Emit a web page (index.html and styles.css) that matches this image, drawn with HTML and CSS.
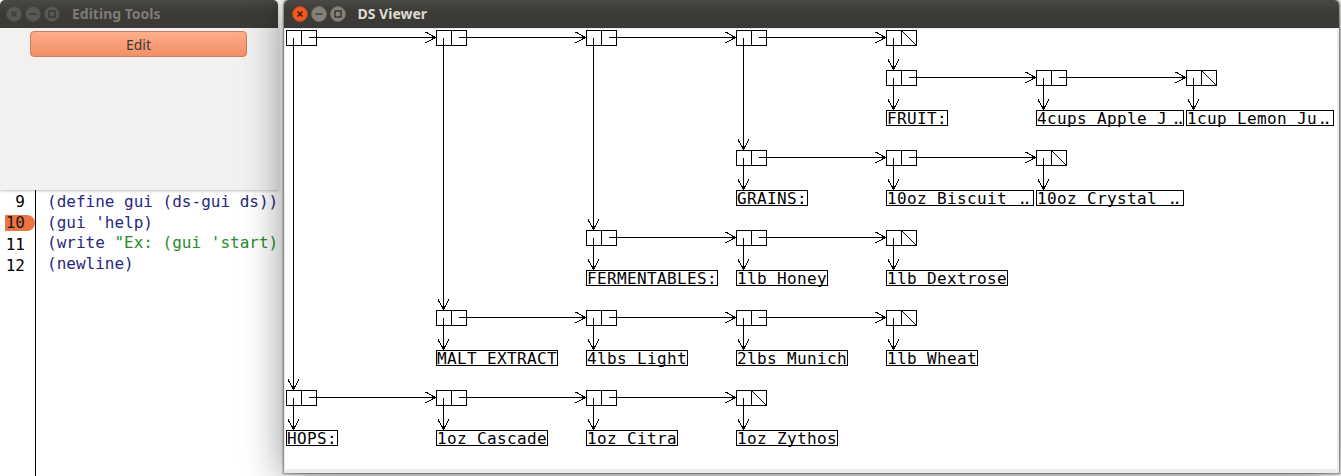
FILE: index.html
```html
<!DOCTYPE html>
<html>
<head>
<meta charset="utf-8">
<title>DS Viewer</title>
<link rel="stylesheet" href="styles.css">
</head>
<body>
<div class="desktop">
  <div class="editor">
    <div class="gutter">
      <div class="ln">9</div>
      <div class="ln"><span class="ln-hl">10</span></div>
      <div class="ln">11</div>
      <div class="ln">12</div>
    </div>
    <div class="code">
      <div class="cl"><span class="kw">(define gui (ds-gui ds))</span></div>
      <div class="cl"><span class="kw">(gui 'help)</span></div>
      <div class="cl"><span class="kw">(write </span><span class="str">"Ex: (gui 'start)</span></div>
      <div class="cl"><span class="kw">(newline)</span></div>
    </div>
  </div>

  <div class="win tools">
    <div class="titlebar inactive">
      <div class="wbtns">
        <svg class="wbtn" width="16" height="16" viewBox="0 0 16 16"><circle class="wb-off" cx="8" cy="8" r="7.5"/><path class="wb-sym-off" d="M5.5 5.5 L10.5 10.5 M10.5 5.5 L5.5 10.5"/></svg>
        <svg class="wbtn" width="16" height="16" viewBox="0 0 16 16"><circle class="wb-off" cx="8" cy="8" r="7.5"/><path class="wb-sym-off" d="M4.5 8 H11.5"/></svg>
        <svg class="wbtn" width="16" height="16" viewBox="0 0 16 16"><circle class="wb-off" cx="8" cy="8" r="7.5"/><rect class="wb-sym-off" x="5" y="5" width="6" height="6"/></svg>
      </div>
      <div class="wtitle">Editing Tools</div>
    </div>
    <div class="tools-body">
      <button class="edit-btn">Edit</button>
    </div>
  </div>

  <div class="win viewer">
    <div class="titlebar">
      <div class="wbtns">
        <svg class="wbtn" width="16" height="16" viewBox="0 0 16 16"><circle class="wb-close" cx="8" cy="8" r="7.5"/><path class="wb-sym-close" d="M5.5 5.5 L10.5 10.5 M10.5 5.5 L5.5 10.5"/></svg>
        <svg class="wbtn" width="16" height="16" viewBox="0 0 16 16"><circle class="wb-gray" cx="8" cy="8" r="7.5"/><path class="wb-sym" d="M4.5 8 H11.5"/></svg>
        <svg class="wbtn" width="16" height="16" viewBox="0 0 16 16"><circle class="wb-gray" cx="8" cy="8" r="7.5"/><rect class="wb-sym" x="5" y="5" width="6" height="6"/></svg>
      </div>
      <div class="wtitle">DS Viewer</div>
    </div>
    <div class="viewer-body">
      <div class="canvas">
        <svg class="diagram" width="1052" height="440" viewBox="285 29 1052 440">
          <defs>
            <marker id="ah" markerUnits="userSpaceOnUse" markerWidth="14" markerHeight="14" refX="11" refY="6" orient="auto" overflow="visible">
              <path class="ah-wing" d="M0.5,0.5 L11,6 L0.5,11.5"/>
              <path class="ah-tip" d="M11,6 L6.5,3.6 L6.5,8.4Z"/>
            </marker>
            <g id="c"><rect x="0.5" y="0.5" width="30" height="15"/><line x1="15.5" y1="0.5" x2="15.5" y2="15.5"/></g>
            <g id="n"><rect x="0.5" y="0.5" width="30" height="15"/><line x1="15.5" y1="0.5" x2="15.5" y2="15.5"/><line x1="15.5" y1="0.5" x2="30.5" y2="15.5"/></g>
          </defs>

          <!-- cons cells -->
          <use href="#c" x="286" y="30"/><use href="#c" x="436" y="30"/><use href="#c" x="586" y="30"/><use href="#c" x="736" y="30"/><use href="#n" x="886" y="30"/>
          <use href="#c" x="886" y="70"/><use href="#c" x="1036" y="70"/><use href="#n" x="1186" y="70"/>
          <use href="#c" x="736" y="150"/><use href="#c" x="886" y="150"/><use href="#n" x="1036" y="150"/>
          <use href="#c" x="586" y="230"/><use href="#c" x="736" y="230"/><use href="#n" x="886" y="230"/>
          <use href="#c" x="436" y="310"/><use href="#c" x="586" y="310"/><use href="#c" x="736" y="310"/><use href="#n" x="886" y="310"/>
          <use href="#c" x="286" y="390"/><use href="#c" x="436" y="390"/><use href="#c" x="586" y="390"/><use href="#n" x="736" y="390"/>

          <!-- cdr pointers -->
          <line class="ptr" x1="308.5" y1="37.5" x2="436" y2="37.5"/>
          <line class="ptr" x1="458.5" y1="37.5" x2="586" y2="37.5"/>
          <line class="ptr" x1="608.5" y1="37.5" x2="736" y2="37.5"/>
          <line class="ptr" x1="758.5" y1="37.5" x2="886" y2="37.5"/>
          <line class="ptr" x1="908.5" y1="77.5" x2="1036" y2="77.5"/>
          <line class="ptr" x1="1058.5" y1="77.5" x2="1186" y2="77.5"/>
          <line class="ptr" x1="758.5" y1="157.5" x2="886" y2="157.5"/>
          <line class="ptr" x1="908.5" y1="157.5" x2="1036" y2="157.5"/>
          <line class="ptr" x1="608.5" y1="237.5" x2="736" y2="237.5"/>
          <line class="ptr" x1="758.5" y1="237.5" x2="886" y2="237.5"/>
          <line class="ptr" x1="458.5" y1="317.5" x2="586" y2="317.5"/>
          <line class="ptr" x1="608.5" y1="317.5" x2="736" y2="317.5"/>
          <line class="ptr" x1="758.5" y1="317.5" x2="886" y2="317.5"/>
          <line class="ptr" x1="308.5" y1="397.5" x2="436" y2="397.5"/>
          <line class="ptr" x1="458.5" y1="397.5" x2="586" y2="397.5"/>
          <line class="ptr" x1="608.5" y1="397.5" x2="736" y2="397.5"/>

          <!-- car pointers -->
          <line class="ptr" x1="293.5" y1="37.5" x2="293.5" y2="390"/>
          <line class="ptr" x1="443.5" y1="37.5" x2="443.5" y2="310"/>
          <line class="ptr" x1="593.5" y1="37.5" x2="593.5" y2="230"/>
          <line class="ptr" x1="743.5" y1="37.5" x2="743.5" y2="150"/>
          <line class="ptr" x1="893.5" y1="37.5" x2="893.5" y2="70"/>
          <line class="ptr" x1="893.5" y1="77.5" x2="893.5" y2="110"/>
          <line class="ptr" x1="1043.5" y1="77.5" x2="1043.5" y2="110"/>
          <line class="ptr" x1="1193.5" y1="77.5" x2="1193.5" y2="110"/>
          <line class="ptr" x1="743.5" y1="157.5" x2="743.5" y2="190"/>
          <line class="ptr" x1="893.5" y1="157.5" x2="893.5" y2="190"/>
          <line class="ptr" x1="1043.5" y1="157.5" x2="1043.5" y2="190"/>
          <line class="ptr" x1="593.5" y1="237.5" x2="593.5" y2="270"/>
          <line class="ptr" x1="743.5" y1="237.5" x2="743.5" y2="270"/>
          <line class="ptr" x1="893.5" y1="237.5" x2="893.5" y2="270"/>
          <line class="ptr" x1="443.5" y1="317.5" x2="443.5" y2="350"/>
          <line class="ptr" x1="593.5" y1="317.5" x2="593.5" y2="350"/>
          <line class="ptr" x1="743.5" y1="317.5" x2="743.5" y2="350"/>
          <line class="ptr" x1="893.5" y1="317.5" x2="893.5" y2="350"/>
          <line class="ptr" x1="293.5" y1="397.5" x2="293.5" y2="430"/>
          <line class="ptr" x1="443.5" y1="397.5" x2="443.5" y2="430"/>
          <line class="ptr" x1="593.5" y1="397.5" x2="593.5" y2="430"/>
          <line class="ptr" x1="743.5" y1="397.5" x2="743.5" y2="430"/>

          <!-- labels -->
          <rect x="886.5" y="110.5" width="61" height="15"/><text x="887" y="124">FRUIT:</text>
          <rect x="1036.5" y="110.5" width="147" height="15"/><text x="1037" y="124">4cups Apple J<tspan class="dots" x="1171.2">..</tspan></text>
          <rect x="1186.5" y="110.5" width="147" height="15"/><text x="1187" y="124">1cup Lemon Ju<tspan class="dots" x="1317.5">..</tspan></text>

          <rect x="736.5" y="190.5" width="71" height="15"/><text x="737" y="204">GRAINS:</text>
          <rect x="886.5" y="190.5" width="147" height="15"/><text x="887" y="204">10oz Biscuit <tspan class="dots" x="1017.5">..</tspan></text>
          <rect x="1036.5" y="190.5" width="147" height="15"/><text x="1037" y="204">10oz Crystal <tspan class="dots" x="1167.5">..</tspan></text>

          <rect x="586.5" y="270.5" width="131" height="15"/><text x="587" y="284">FERMENTABLES:</text>
          <rect x="736.5" y="270.5" width="91" height="15"/><text x="737" y="284">1lb Honey</text>
          <rect x="886.5" y="270.5" width="121" height="15"/><text x="887" y="284">1lb Dextrose</text>

          <rect x="436.5" y="350.5" width="121" height="15"/><text x="437" y="364">MALT EXTRACT</text>
          <rect x="586.5" y="350.5" width="101" height="15"/><text x="587" y="364">4lbs Light</text>
          <rect x="736.5" y="350.5" width="111" height="15"/><text x="737" y="364">2lbs Munich</text>
          <rect x="886.5" y="350.5" width="91" height="15"/><text x="887" y="364">1lb Wheat</text>

          <rect x="286.5" y="430.5" width="51" height="15"/><text x="287" y="444">HOPS:</text>
          <rect x="436.5" y="430.5" width="111" height="15"/><text x="437" y="444">1oz Cascade</text>
          <rect x="586.5" y="430.5" width="91" height="15"/><text x="587" y="444">1oz Citra</text>
          <rect x="736.5" y="430.5" width="101" height="15"/><text x="737" y="444">1oz Zythos</text>
        </svg>
      </div>
    </div>
  </div>
</div>
</body>
</html>
```

FILE: styles.css
```css
html, body {
  margin: 0;
  padding: 0;
  width: 1341px;
  height: 476px;
  overflow: hidden;
  background: #ffffff;
}

.desktop {
  position: relative;
  width: 1341px;
  height: 476px;
  overflow: hidden;
  background: #ffffff;
}

/* ---------- background code editor ---------- */
.editor {
  position: absolute;
  left: 0;
  top: 0;
  width: 1341px;
  height: 476px;
  display: flex;
  background: #ffffff;
  font-family: "DejaVu Sans Mono", monospace;
  font-size: 16px;
}

.gutter {
  width: 35px;
  border-right: 1px solid #000;
  padding-top: 192px;
  box-sizing: content-box;
}

.ln {
  height: 20.67px;
  line-height: 20.67px;
  text-align: right;
  padding-right: 10px;
  color: #000;
}

.ln-hl {
  display: block;
  margin: 2px 0 0 5px;
  height: 16px;
  line-height: 16px;
  margin-right: -10px;
  padding-right: 10px;
  background: #ec7443;
  border-radius: 0 8px 8px 0;
  color: #1a1a1a;
}

.code {
  padding-top: 192px;
  padding-left: 11px;
}

.cl {
  height: 20.67px;
  line-height: 20.67px;
  white-space: pre;
}

.kw { color: #27277f; }
.str { color: #2a8a2a; }

/* ---------- windows ---------- */
.win {
  position: absolute;
  top: 0;
  display: flex;
  flex-direction: column;
  border-radius: 5px 5px 0 0;
  overflow: hidden;
}

.titlebar {
  height: 28px;
  flex: none;
  display: flex;
  align-items: center;
  background: linear-gradient(#4a4945, #3c3b37 40%, #3a3935);
  font-family: "Noto Sans", "Open Sans", sans-serif;
  font-weight: 700;
  font-size: 14px;
  color: #dfdbd2;
}

.titlebar.inactive { color: #7f7c77; }

.wbtns {
  display: flex;
  gap: 3px;
  padding-left: 7.5px;
}

.tools .wbtns { padding-left: 6px; }

.wbtn { display: block; }

.wtitle {
  margin-left: 12px;
  line-height: 28px;
}

.wb-off { fill: #595854; stroke: #4a4945; stroke-width: 1; }
.wb-sym-off { fill: none; stroke: #3c3b37; stroke-width: 1.6; }
.wb-close { fill: #ec5a24; stroke: #b84318; stroke-width: 1; }
.wb-sym-close { fill: none; stroke: #4b1a06; stroke-width: 1.6; }
.wb-gray { fill: #858379; stroke: #6c6a64; stroke-width: 1; }
.wb-sym { fill: none; stroke: #3c3b37; stroke-width: 1.6; }

/* Editing Tools */
.tools {
  left: 0;
  width: 278px;
  height: 190px;
  background: #f2f1f0;
  box-shadow: 0 1px 3px rgba(0,0,0,0.25);
}

.tools-body {
  flex: 1;
  padding: 3px 31px 0 30px;
}

.edit-btn {
  display: block;
  width: 217px;
  height: 26px;
  margin: 0;
  padding: 0;
  border: 1px solid #c9805f;
  border-radius: 4px;
  background: linear-gradient(#fcae8b, #f38f66);
  font-family: "Noto Sans", "Open Sans", sans-serif;
  font-size: 14px;
  color: #3e3a37;
}

/* DS Viewer */
.viewer {
  left: 284px;
  width: 1055px;
  height: 473px;
  background: #ececec;
  box-shadow: 0 0 2px 1px rgba(0,0,0,0.45), 0 4px 40px rgba(0,0,0,0.45);
}

.viewer-body {
  flex: 1;
  padding: 1px 2px 4px 1px;
}

.canvas {
  width: 1052px;
  height: 440px;
  background: #ffffff;
}

.diagram {
  display: block;
  shape-rendering: crispEdges;
}

.diagram rect,
.diagram line {
  fill: none;
  stroke: #000;
  stroke-width: 1;
}

.diagram .ptr { marker-end: url(#ah); }

.ah-wing { fill: none; stroke: #000; stroke-width: 1; }
.ah-tip { fill: #000; stroke: none; }

.diagram text {
  font-family: "DejaVu Sans Mono", monospace;
  font-size: 16px;
  letter-spacing: 0.37px;
  fill: #000;
}

.diagram .dots { letter-spacing: -5px; }
```
